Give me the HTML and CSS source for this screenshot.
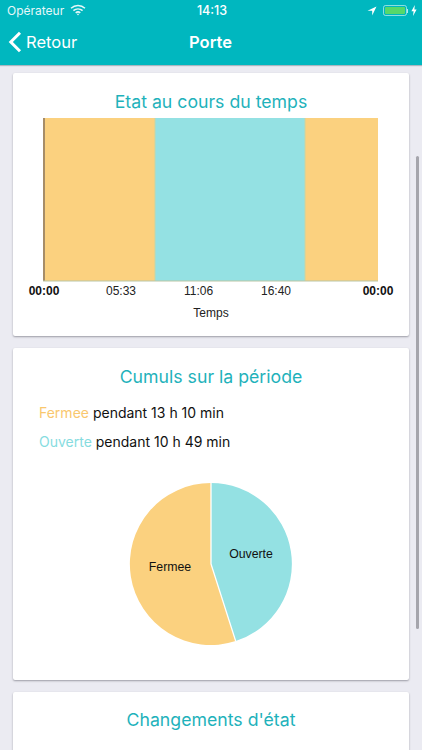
FILE: index.html
```html
<!DOCTYPE html>
<html lang="fr">
<head>
<meta charset="utf-8">
<title>Porte</title>
<link rel="stylesheet" href="styles.css">
</head>
<body>
<div class="screen">
  <header class="header">
    <div class="status">
      <div class="status-left">
        <span>Opérateur</span>
        <svg class="wifi" viewBox="0 0 16 12" width="16" height="12"><path d="M1 4.2C5 .6 11 .6 15 4.2M3.4 6.6c2.7-2.3 6.5-2.3 9.2 0M5.7 8.8c1.4-1.1 3.2-1.1 4.6 0" fill="none" stroke="#fff" stroke-width="1.5"/><path d="M6.8 10.1 8 11.4l1.2-1.3c-.7-.5-1.700-.5-2.400 0z" fill="#fff"/></svg>
      </div>
      <div class="status-time">14:13</div>
      <div class="status-right">
        <svg viewBox="0 0 10 10" width="10" height="10"><path d="M9.5.5.5 4.7h4.7v4.8z" fill="#fff"/></svg>
        <div class="battery"><div class="battery-fill"></div></div>
        <div class="battery-cap"></div>
        <svg viewBox="0 0 6 11" width="6" height="11"><path d="M3.8 0 .4 6.2h2.2L2 11l3.6-6.4H3.4z" fill="#fff"/></svg>
      </div>
    </div>
    <nav class="nav">
      <div class="back">
        <svg viewBox="0 0 14 22" width="14" height="22"><path d="M12 1.8 2.8 11 12 20.2" fill="none" stroke="#fff" stroke-width="3"/></svg>
        <span>Retour</span>
      </div>
      <div class="nav-title">Porte</div>
    </nav>
  </header>

  <main class="content">
    <section class="card card-time">
      <h2 class="card-title">Etat au cours du temps</h2>
      <svg class="chart" viewBox="0 0 396 207" width="396" height="207">
        <rect x="30" y="5" width="112" height="163" fill="#fbd17f"/>
        <rect x="142" y="5" width="150" height="163" fill="#94e1e3"/>
        <rect x="292" y="5" width="73" height="163" fill="#fbd17f"/>
        <rect x="30" y="5" width="2" height="163" fill="#a78d68"/>
        <rect x="141.500" y="5" width="1" height="163" fill="#c6d6a8"/>
        <rect x="291.500" y="5" width="1" height="163" fill="#c6d6a8"/>
        <rect x="30" y="167.500" width="335" height="1" fill="#b9c6a5"/>
        <g class="tick">
          <text class="tick-bold" x="31" y="182" text-anchor="middle">00:00</text>
          <text x="108" y="182" text-anchor="middle">05:33</text>
          <text x="185.500" y="182" text-anchor="middle">11:06</text>
          <text x="263" y="182" text-anchor="middle">16:40</text>
          <text class="tick-bold" x="365" y="182" text-anchor="middle">00:00</text>
          <text x="198" y="204" text-anchor="middle">Temps</text>
        </g>
      </svg>
    </section>

    <section class="card card-sum">
      <h2 class="card-title">Cumuls sur la période</h2>
      <p class="line"><span class="closed">Fermee</span> pendant 13 h 10 min</p>
      <p class="line"><span class="open">Ouverte</span> pendant 10 h 49 min</p>
      <svg class="pie" viewBox="0 0 164 164" width="164" height="164">
        <path d="M82 82V1A81 81 0 0 1 106.700 159.100Z" fill="#94e1e3"/>
        <path d="M82 82 106.700 159.100A81 81 0 1 1 82 1Z" fill="#fbd17f"/>
        <path d="M82 1V82L106.700 159.100" fill="none" stroke="#fff" stroke-width="1.300"/>
        <text x="122" y="76" text-anchor="middle">Ouverte</text>
        <text x="41" y="89" text-anchor="middle">Fermee</text>
      </svg>
    </section>

    <section class="card card-changes">
      <h2 class="card-title">Changements d'état</h2>
    </section>
  </main>

  <div class="scrollbar"></div>
</div>
</body>
</html>
```
FILE: styles.css
```css
* { box-sizing: border-box; }
html, body { margin: 0; padding: 0; }
body { font-family: Inter, "Liberation Sans", sans-serif; background: #ebebf2; }
.screen { position: relative; width: 422px; height: 750px; overflow: hidden; display: flex; flex-direction: column; }
.header { height: 65px; flex: none; background: #00b7bf; color: #fff; box-shadow: 0 1px 1px rgba(90,120,130,.45); position: relative; }
.status { height: 21px; padding: 0 5px 0 7px; display: grid; grid-template-columns: 1fr auto 1fr; align-items: center; font-size: 12px; }
.status-left { display: flex; align-items: center; gap: 6px; opacity: .9; }
.wifi { margin-top: -1px; }
.status-time { font-weight: 500; font-size: 12.500px; }
.status-right { display: flex; justify-content: flex-end; align-items: center; }
.battery { width: 24px; height: 11px; margin-left: 6px; border: 1px solid rgba(255,255,255,.55); border-radius: 2.500px; padding: 1px; }
.battery-fill { height: 100%; background: #56d86a; border-radius: 1px; }
.battery-cap { width: 1.500px; height: 4px; background: rgba(255,255,255,.7); margin-right: 3px; }
.nav { position: relative; height: 44px; display: flex; align-items: center; justify-content: center; }
.back { position: absolute; left: 8px; top: 10px; display: flex; align-items: center; gap: 4px; font-size: 16.500px; line-height: 22px; }
.nav-title { font-size: 16.500px; font-weight: 600; margin-top: -2px; margin-right: 1px; }
.content { flex: none; padding: 8px 13px 0; display: flex; flex-direction: column; gap: 12px; }
.card { width: 396px; background: #fff; border-radius: 2px; box-shadow: 0 1px 2px rgba(60,60,70,.45); display: flex; flex-direction: column; flex: none; }
.card-time { height: 263px; }
.card-sum { height: 332px; }
.card-changes { height: 100px; }
.card-title { margin: 0; font-size: 17.700px; line-height: 22px; font-weight: 400; color: #1fb2bb; text-align: center; }
.card-time .card-title { padding-top: 18px; }
.card-sum .card-title { padding-top: 18px; }
.card-changes .card-title { padding-top: 17px; }
.chart { display: block; }
.tick text { font-family: "Liberation Sans", Arial, sans-serif; font-size: 12px; fill: #222; }
.tick .tick-bold { font-weight: 700; fill: #111; }
.line { margin: 0 0 0 26px; font-size: 14px; line-height: 20px; color: #111; }
.card-sum .line:first-of-type { margin-top: 15px; }
.line + .line { margin-top: 9px; }
.closed { color: #f9c76e; }
.open { color: #86dcdf; }
.pie { display: block; margin: 30px auto 0; }
.pie text { font-family: "Liberation Sans", Arial, sans-serif; font-size: 12.300px; fill: #111; }
.scrollbar { position: absolute; left: 416px; top: 156px; width: 2.500px; height: 473px; background: #a5a5ac; border-radius: 2px; }
```
